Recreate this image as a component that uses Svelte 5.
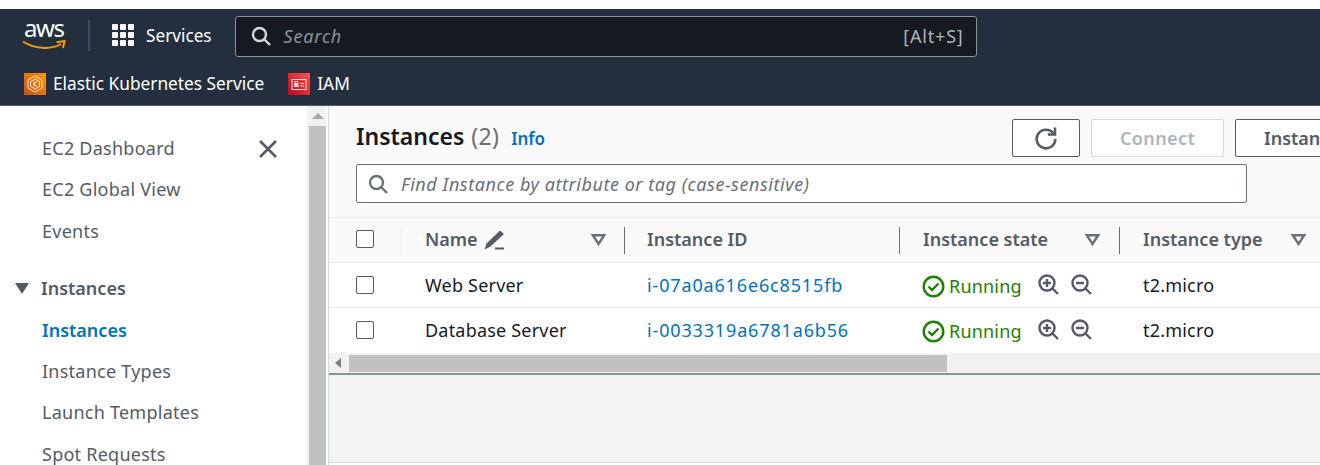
<script>
    const sideTop = ["EC2 Dashboard", "EC2 Global View", "Events"];
    const sideSub = ["Instance Types", "Launch Templates", "Spot Requests"];
    const rows = [
        { name: "Web Server", id: "i-07a0a616e6c8515fb" },
        { name: "Database Server", id: "i-0033319a6781a6b56" },
    ];
</script>

<div class="page">
    <header class="top">
        <div class="bar">
            <div class="logo">
                <span class="logo-text">aws</span>
                <svg width="44" height="11" viewBox="0 0 44 11">
                    <path d="M1 1.5C12 9 29 10 39 4" fill="none" stroke="#ff9900" stroke-width="2" />
                    <path d="M34.5 2.2L42.5 1L41 8" fill="none" stroke="#ff9900" stroke-width="2" />
                </svg>
            </div>
            <span class="divider"></span>
            <svg class="grid-icon" width="22" height="22" viewBox="0 0 22 22" fill="#fff">
                {#each [0, 8, 16] as y}
                    {#each [0, 8, 16] as x}
                        <rect {x} {y} width="6" height="6" rx="1" />
                    {/each}
                {/each}
            </svg>
            <span class="services">Services</span>
            <div class="search">
                <svg width="20" height="20" viewBox="0 0 20 20" fill="none" stroke="#d5dbdb" stroke-width="2.4">
                    <circle cx="8.5" cy="8.5" r="6.5" />
                    <path d="M13 13l6 6" />
                </svg>
                <span class="search-text">Search</span>
                <span class="shortcut">[Alt+S]</span>
            </div>
        </div>
        <div class="favs">
            <span class="fav">
                <svg width="22" height="22" viewBox="0 0 22 22">
                    <defs>
                        <linearGradient id="eks" x1="0" y1="1" x2="1" y2="0">
                            <stop offset="0" stop-color="#c8511b" />
                            <stop offset="1" stop-color="#ff9900" />
                        </linearGradient>
                    </defs>
                    <rect width="22" height="22" fill="url(#eks)" />
                    <path d="M11 3l7 4v8l-7 4-7-4V7z" fill="none" stroke="#fff" stroke-width="1" opacity=".8" />
                    <path d="M11 6l4.500 2.600v4.800L11 16l-4.500-2.600V8.600z" fill="none" stroke="#fff" stroke-width="1" opacity=".8" />
                    <path d="M10 8.500v5M13 8.500L10 11l3 2.500" fill="none" stroke="#fff" stroke-width=".9" />
                </svg>
                Elastic Kubernetes Service
            </span>
            <span class="fav">
                <svg width="22" height="22" viewBox="0 0 22 22">
                    <defs>
                        <linearGradient id="iam" x1="0" y1="1" x2="1" y2="0">
                            <stop offset="0" stop-color="#bd0816" />
                            <stop offset="1" stop-color="#ff5252" />
                        </linearGradient>
                    </defs>
                    <rect width="22" height="22" fill="url(#iam)" />
                    <rect x="4" y="6.5" width="14" height="10" fill="none" stroke="#fff" stroke-width="1" opacity=".85" />
                    <rect x="6" y="10" width="4.5" height="4" fill="#fff" opacity=".8" />
                    <path d="M7 10V8.500h2.500V10" fill="none" stroke="#fff" stroke-width=".8" />
                    <path d="M12.500 10.500h3.500M12.500 13h3.500" stroke="#fff" stroke-width="1" opacity=".85" />
                </svg>
                IAM
            </span>
        </div>
    </header>

    <div class="body">
        <aside class="side">
            <nav class="nav">
                <div class="nav-head">
                    <a class="nav-link">{sideTop[0]}</a>
                    <svg class="close" width="20" height="20" viewBox="0 0 20 20" fill="none" stroke="#545b64" stroke-width="2.6">
                        <path d="M2 2l16 16M18 2L2 18" />
                    </svg>
                </div>
                <a class="nav-link">{sideTop[1]}</a>
                <a class="nav-link">{sideTop[2]}</a>
                <div class="nav-group">
                    <svg width="14" height="11" viewBox="0 0 14 11" fill="#545b64"><path d="M0 0h14L7 11z" /></svg>
                    Instances
                </div>
                <a class="nav-link active">Instances</a>
                {#each sideSub as item}
                    <a class="nav-link">{item}</a>
                {/each}
            </nav>
            <div class="vscroll">
                <div class="vscroll-btn"><svg width="12" height="6" viewBox="0 0 12 6" fill="#a9a9a9"><path d="M6 0l6 6H0z" /></svg></div>
                <div class="vscroll-thumb"></div>
            </div>
        </aside>

        <main class="main">
            <section class="panel">
                <div class="title-row">
                    <h1>Instances <span class="count">(2)</span></h1>
                    <a class="info">Info</a>
                    <div class="actions">
                        <button class="btn icon">
                            <svg width="24" height="24" viewBox="0 0 24 24" fill="none" stroke="#545b64" stroke-width="2.6">
                                <path d="M19.5 7.5A9.3 9.3 0 1 0 21.3 13" />
                                <path d="M21 1.5v7h-7" />
                            </svg>
                        </button>
                        <button class="btn disabled">Connect</button>
                        <button class="btn">Instance state</button>
                    </div>
                </div>
                <div class="filter">
                    <svg width="20" height="20" viewBox="0 0 20 20" fill="none" stroke="#687078" stroke-width="2.4">
                        <circle cx="8.5" cy="8.5" r="6.5" />
                        <path d="M13 13l6 6" />
                    </svg>
                    <span>Find Instance by attribute or tag (case-sensitive)</span>
                </div>
            </section>

            <div class="table">
                <div class="row head">
                    <div class="c c-check"><span class="check"></span></div>
                    <div class="c c-name sep-light">
                        <span>Name</span>
                        <svg width="21" height="20" viewBox="0 0 21 20" fill="#545b64">
                            <path d="M16 0.500l4 3.500L6.500 16.500 0.500 19.500 2.500 13.500z" />
                            <path d="M11 17.500h9v2h-9z" />
                        </svg>
                        <svg class="sort" width="15" height="12" viewBox="0 0 15 12" fill="none" stroke="#687078" stroke-width="2.4"><path d="M1.800 1.200h11.400L7.500 10z" /></svg>
                    </div>
                    <div class="c c-id sep"><span>Instance ID</span></div>
                    <div class="c c-state sep">
                        <span>Instance state</span>
                        <svg class="sort" width="15" height="12" viewBox="0 0 15 12" fill="none" stroke="#687078" stroke-width="2.4"><path d="M1.800 1.200h11.400L7.500 10z" /></svg>
                    </div>
                    <div class="c c-type sep">
                        <span>Instance type</span>
                        <svg class="sort" width="15" height="12" viewBox="0 0 15 12" fill="none" stroke="#687078" stroke-width="2.4"><path d="M1.800 1.200h11.400L7.500 10z" /></svg>
                    </div>
                </div>
                {#each rows as r}
                    <div class="row">
                        <div class="c c-check"><span class="check"></span></div>
                        <div class="c c-name plain">{r.name}</div>
                        <div class="c c-id"><a class="link">{r.id}</a></div>
                        <div class="c c-state">
                            <svg class="ok" width="23" height="23" viewBox="0 0 23 23" fill="none" stroke="#1d8102" stroke-width="2.4">
                                <circle cx="11.500" cy="11.500" r="9.800" />
                                <path d="M6.500 11.500l3.500 3.500 6.500-6.500" />
                            </svg>
                            <span class="running">Running</span>
                            <svg class="zoom" width="21" height="21" viewBox="0 0 21 21" fill="none" stroke="#545b64" stroke-width="2.400">
                                <circle cx="9" cy="9" r="7.500" />
                                <path d="M14.500 14.500l5.500 5.500M5 9h8M9 5v8" />
                            </svg>
                            <svg class="zoom" width="21" height="21" viewBox="0 0 21 21" fill="none" stroke="#545b64" stroke-width="2.400">
                                <circle cx="9" cy="9" r="7.500" />
                                <path d="M14.500 14.500l5.500 5.500M5 9h8" />
                            </svg>
                        </div>
                        <div class="c c-type plain">t2.micro</div>
                    </div>
                {/each}
            </div>

            <div class="hscroll">
                <svg width="6" height="10" viewBox="0 0 6 10" fill="#7f7f7f"><path d="M6 0v10L0 5z" /></svg>
                <div class="hscroll-thumb"></div>
            </div>
            <div class="lower"></div>
        </main>
    </div>
</div>

<style>
    :global(body) {
        background: #fff;
        overflow: hidden;
    }

    .page {
        width: 1320px;
        height: 465px;
        overflow: hidden;
        padding-top: 9px;
        box-sizing: border-box;
        font-family: "Noto Sans", "Open Sans", sans-serif;
        font-size: 18px;
        color: #16191f;
        display: flex;
        flex-direction: column;
    }

    .top {
        background: #232f3e;
        height: 96px;
        flex: none;
        color: #fff;
        border-bottom: 1px solid #545b64;
        box-sizing: content-box;
    }

    .bar {
        display: flex;
        align-items: center;
        height: 48px;
        padding: 4px 0 0 22px;
        box-sizing: border-box;
    }

    .logo {
        width: 44px;
        height: 31px;
        position: relative;
        margin-right: 22px;
    }

    .logo-text {
        display: block;
        font-size: 24px;
        line-height: 22px;
        letter-spacing: -1.4px;
        margin-left: 2px;
        margin-top: -3px;
    }

    .logo svg {
        display: block;
        margin-top: 1px;
    }

    .divider {
        width: 2px;
        height: 31px;
        background: #414d5c;
        margin-right: 22px;
    }

    .services {
        margin-left: 12px;
        font-size: 17.200px;
        margin-right: 23px;
    }

    .search {
        width: 725px;
        height: 39px;
        box-sizing: content-box;
        background: #16191f;
        border: 1px solid #879596;
        border-radius: 3px;
        display: flex;
        align-items: center;
        padding-left: 15px;
        color: #aab7b8;
        margin-top: 2px;
        letter-spacing: 0.8px;
    }

    .search-text {
        font-style: italic;
        margin-left: 13px;
        color: #879596;
    }

    .shortcut {
        margin-left: auto;
        margin-right: 12px;
        color: #aab7b8;
    }

    .favs {
        display: flex;
        height: 48px;
        align-items: center;
        padding: 4px 0 0 24px;
        box-sizing: border-box;
        gap: 24px;
    }

    .fav {
        display: flex;
        align-items: center;
        gap: 7px;
        font-size: 17.300px;
    }

    .fav svg {
        margin-top: 2px;
    }

    .body {
        display: flex;
        flex: 1;
        min-height: 0;
    }

    .side {
        width: 329px;
        flex: none;
        display: flex;
        border-right: 1px solid #d5dbdb;
        box-sizing: border-box;
    }

    .nav {
        width: 307px;
        flex: none;
        padding: 22px 29px 0 0;
        box-sizing: border-box;
        color: #545b64;
        display: flex;
        flex-direction: column;
        letter-spacing: 0.25px;
    }

    .nav > * {
        flex: none;
    }

    .nav-head {
        display: flex;
        justify-content: space-between;
        align-items: center;
    }

    .nav-link {
        display: block;
        padding-left: 42px;
        height: 41.300px;
        line-height: 41px;
    }

    .close {
        margin-top: 1px;
    }

    .nav-group {
        display: flex;
        align-items: center;
        gap: 12px;
        padding-left: 15px;
        height: 41px;
        margin-top: 16px;
        margin-bottom: 1px;
        font-weight: 600;
        letter-spacing: 0;
    }

    .active {
        color: #0073bb;
        font-weight: 600;
        letter-spacing: 0;
    }

    .vscroll {
        width: 19px;
        background: #f1f1f1;
    }

    .vscroll-btn {
        height: 20px;
        display: flex;
        align-items: center;
        justify-content: center;
        padding-left: 2px;
    }

    .vscroll-thumb {
        width: 17px;
        height: 400px;
        background: #c1c1c1;
        margin-left: 2px;
    }

    .main {
        flex: 1;
        min-width: 0;
        overflow: hidden;
        display: flex;
        flex-direction: column;
    }

    .panel {
        background: #fafafa;
        height: 112px;
        flex: none;
        padding: 11px 0 0 27px;
        box-sizing: border-box;
        border-bottom: 1px solid #eaeded;
    }

    .title-row {
        display: flex;
        align-items: center;
        height: 38px;
        white-space: nowrap;
    }

    h1 {
        margin: 0;
        font-size: 23px;
        font-weight: 600;
    }

    .count {
        font-weight: 400;
        color: #687078;
        margin-left: 1px;
        letter-spacing: 0.3px;
    }

    .info {
        color: #0073bb;
        font-weight: 600;
        font-size: 17px;
        margin-left: 12px;
        margin-top: 4px;
    }

    .actions {
        margin-left: auto;
        display: flex;
        gap: 11px;
        width: 308px;
        flex: none;
        margin-top: 4px;
    }

    .btn {
        height: 38px;
        box-sizing: border-box;
        background: #fff;
        border: 1px solid #545b64;
        border-radius: 2px;
        font: inherit;
        font-weight: 600;
        color: #545b64;
        padding: 0 28px;
        flex: none;
        white-space: nowrap;
    }

    .btn.icon {
        width: 68px;
        padding: 0;
        display: flex;
        align-items: center;
        justify-content: center;
    }

    .btn.disabled {
        border-color: #d5dbdb;
        color: #aab7b8;
        width: 133px;
        padding: 0;
        letter-spacing: 0.4px;
    }

    .filter {
        margin-top: 9px;
        width: 891px;
        height: 39px;
        box-sizing: border-box;
        background: #fff;
        border: 1px solid #687078;
        border-radius: 2px;
        display: flex;
        align-items: center;
        padding-left: 11px;
        gap: 13px;
        font-style: italic;
        color: #687078;
        letter-spacing: 0.55px;
    }

    .table {
        background: #fff;
        flex: none;
        min-width: 1100px;
    }

    .row {
        display: flex;
        height: 45px;
        align-items: center;
        border-bottom: 1px solid #eaeded;
        box-sizing: border-box;
        white-space: nowrap;
    }

    .row:last-child {
        border-bottom-color: transparent;
    }

    .head {
        background: #fafafa;
        color: #545b64;
        font-weight: 600;
    }

    .head span {
        margin-top: -2px;
    }

    .c {
        display: flex;
        align-items: center;
        flex: none;
        height: 27px;
        box-sizing: border-box;
        position: relative;
    }

    .sep::before,
    .sep-light::before {
        content: "";
        position: absolute;
        left: 0;
        top: 0;
        height: 27px;
        width: 1px;
        background: #687078;
    }

    .sep-light::before {
        background: #eaeded;
    }

    .plain {
        letter-spacing: 0.2px;
    }

    .c-check {
        width: 72px;
        padding-left: 27px;
    }

    .c-name {
        width: 223px;
        padding-left: 24px;
        gap: 6px;
    }

    .c-id {
        width: 275px;
        padding-left: 23px;
    }

    .c-state {
        width: 220px;
        padding-left: 24px;
    }

    .c-type {
        width: 200px;
        padding-left: 24px;
    }

    .sort {
        position: absolute;
        top: 7px;
    }

    .c-name .sort {
        left: 190px;
    }

    .c-state .sort {
        left: 186px;
    }

    .c-type .sort {
        left: 172px;
    }

    .check {
        width: 18px;
        height: 18px;
        box-sizing: border-box;
        background: #fff;
        border: 1px solid #545b64;
        border-radius: 2px;
    }

    .link {
        color: #0073bb;
        letter-spacing: 0.85px;
    }

    .ok {
        flex: none;
        margin-top: 3px;
        margin-left: -1px;
    }

    .running {
        color: #1d8102;
        margin-left: 4px;
        margin-top: 1px;
        letter-spacing: 0.2px;
    }

    .zoom {
        margin-left: 12px;
        margin-top: -2px;
        flex: none;
    }

    .running + .zoom {
        margin-left: 16px;
    }

    .hscroll {
        height: 22px;
        background: #f1f1f1;
        flex: none;
        display: flex;
        align-items: center;
        padding-left: 6px;
        border-bottom: 2px solid #879596;
        box-sizing: border-box;
    }

    .hscroll-thumb {
        width: 598px;
        height: 17px;
        background: #c1c1c1;
        margin-left: 8px;
    }

    .lower {
        height: 87px;
        flex: none;
        background: #f2f3f3;
        border-bottom: 1px solid #d5dbdb;
    }
</style>
